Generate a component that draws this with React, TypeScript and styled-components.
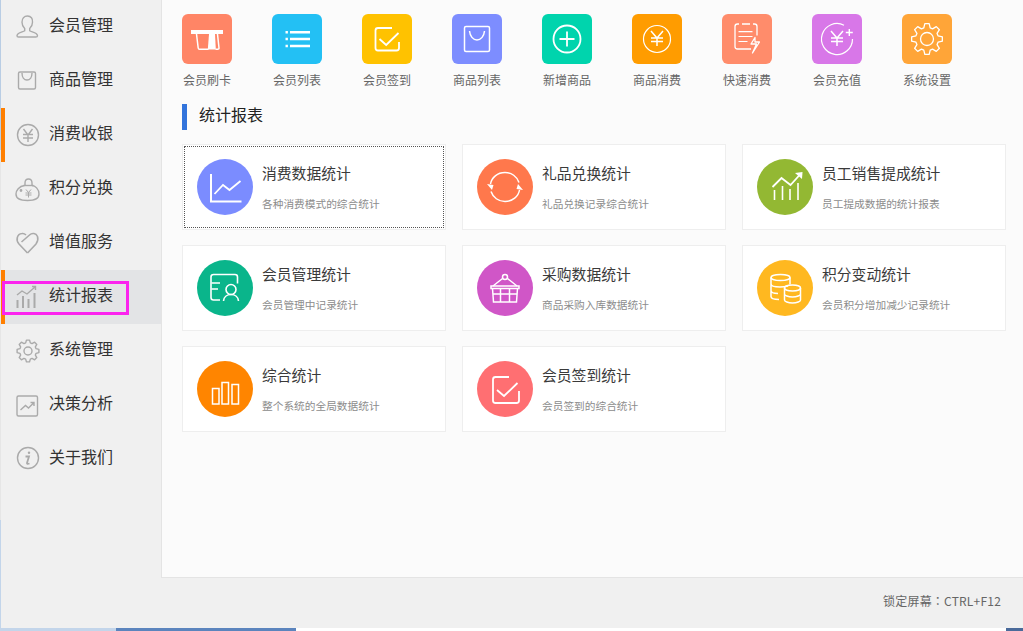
import React from "react";
import styled, { createGlobalStyle } from "styled-components";

const Global = createGlobalStyle`
  html, body { margin: 0; padding: 0; height: 631px; overflow: hidden; background: #fff; }
  * { box-sizing: border-box; }
`;

const FONT = `"Noto Sans CJK SC", "Noto Sans", "Liberation Sans", sans-serif`;

const Frame = styled.div`
  position: relative;
  width: 1023px;
  height: 631px;
  display: flex;
  flex-direction: column;
  font-family: ${FONT};
  overflow: hidden;
`;
const Window = styled.div`
  flex: 0 0 628px;
  display: flex;
  min-height: 0;
`;
const LeftEdge = styled.div`
  flex: 0 0 1px;
  background: linear-gradient(#b9cde4 0 150px, #e6e6e6 150px 520px, #c3d5ea 520px);
`;
const Sidebar = styled.nav`
  flex: 0 0 160px;
  background: #f0f0f0;
`;
const NavItem = styled.div<{ $marked?: boolean; $active?: boolean }>`
  height: 54px;
  display: flex;
  align-items: center;
  gap: 5px;
  padding-left: 7px;
  border-left: 4px solid ${(p) => (p.$marked ? "#ff7f00" : "transparent")};
  background: ${(p) => (p.$active ? "#e3e4e6" : "transparent")};
  font-size: 16px;
  color: #333;
`;
const NavLabel = styled.span`
  padding-bottom: 6px;
`;
const NavIcon = styled.svg`
  flex: 0 0 32px;
  width: 32px;
  height: 32px;
  fill: none;
  stroke: #aaa;
  stroke-width: 1.4;
`;
const Highlight = styled.div`
  position: absolute;
  left: 2px;
  top: 281px;
  width: 127px;
  height: 34px;
  border: 3px solid #fb24ee;
`;
const Right = styled.div`
  flex: 1;
  display: flex;
  flex-direction: column;
  min-width: 0;
`;
const Main = styled.main`
  flex: 0 0 578px;
  background: #fbfbfb;
  border-left: 1px solid #e4e4e4;
  border-bottom: 1px solid #e4e4e4;
  padding: 14px 20px 0;
`;
const QuickRow = styled.div`
  display: flex;
  gap: 40px;
`;
const Quick = styled.div`
  width: 50px;
  display: flex;
  flex-direction: column;
  align-items: center;
`;
const Tile = styled.svg<{ $color: string }>`
  width: 50px;
  height: 50px;
  border-radius: 6px;
  background: ${(p) => p.$color};
  fill: none;
  stroke: #fff;
  stroke-width: 1.5;
`;
const QuickLabel = styled.span`
  margin-top: 7px;
  font-size: 12px;
  line-height: 17px;
  color: #666;
  white-space: nowrap;
`;
const SectionTitle = styled.h2`
  margin: 16px 0 0;
  height: 26px;
  border-left: 5px solid #3274dc;
  padding-left: 12px;
  font-size: 16px;
  font-weight: 400;
  line-height: 20px;
  color: #222;
`;
const Grid = styled.div`
  margin-top: 14px;
  display: grid;
  grid-template-columns: repeat(3, 264px);
  grid-auto-rows: 86px;
  column-gap: 16px;
  row-gap: 15px;
`;
const Card = styled.div<{ $focused?: boolean }>`
  background: #fff;
  border: 1px solid #eee;
  padding: 14px 0 0 14px;
  display: flex;
  align-items: flex-start;
  gap: 9px;
  outline: ${(p) => (p.$focused ? "1px dotted #555" : "none")};
  outline-offset: -3px;
`;
const Circle = styled.svg<{ $color: string }>`
  flex: 0 0 56px;
  width: 56px;
  height: 56px;
  border-radius: 50%;
  background: ${(p) => p.$color};
  fill: none;
  stroke: #fff;
  stroke-width: 1.5;
`;
const CardText = styled.div`
  padding-top: 3px;
  display: flex;
  flex-direction: column;
  gap: 13px;
`;
const CardTitle = styled.span`
  font-size: 14.8px;
  line-height: 21px;
  color: #3a3a3a;
  white-space: nowrap;
`;
const CardSub = styled.span`
  font-size: 10.7px;
  line-height: 16px;
  color: #8c8c8c;
  white-space: nowrap;
`;
const Footer = styled.footer`
  flex: 1;
  background: #f0f0f0;
  display: flex;
  justify-content: flex-end;
  align-items: flex-start;
  padding: 14px 22px 0 0;
  font-family: "Noto Sans CJK TC", ${FONT};
  font-size: 12px;
  letter-spacing: 0.2px;
  line-height: 17px;
  color: #666;
`;
const Taskbar = styled.div`
  flex: 0 0 3px;
  display: flex;
`;
const TaskSegment = styled.div<{ $w: number; $color: string }>`
  flex: 0 0 ${(p) => p.$w}px;
  background: ${(p) => p.$color};
`;

const gearPath = (cx: number, cy: number, outer: number, inner: number, teeth = 8) => {
  const pts: string[] = [];
  const step = (Math.PI * 2) / teeth;
  for (let i = 0; i < teeth; i++) {
    const a = i * step - Math.PI / 2;
    const list: [number, number][] = [
      [a - step * 0.36, inner],
      [a - step * 0.18, outer],
      [a + step * 0.18, outer],
      [a + step * 0.36, inner],
    ];
    list.forEach(([ang, r]) =>
      pts.push(`${(cx + Math.cos(ang) * r).toFixed(2)} ${(cy + Math.sin(ang) * r).toFixed(2)}`)
    );
  }
  return "M" + pts.join("L") + "Z";
};

const navIcons: Record<string, React.ReactNode> = {
  user: (
    <>
      <path d="M15.500 5c-3.400 0-5.500 2.700-5.500 6.200 0 2.800 1.300 5 2.700 6.400v2.200c-1.800 1.300-7.700 1.800-7.700 5 0 1 .6 1.200 1.500 1.200h17.200c1 0 1.800-.3 1.800-1.200 0-3.200-6-3.700-7.800-5v-2.200c1.500-1.400 2.800-3.600 2.800-6.400C21 7.700 18.900 5 15.500 5z" />
    </>
  ),
  bag: (
    <>
      <rect x="6.500" y="7" width="17" height="17" rx="1.500" />
      <path d="M10 8c0 4 2 7 5 7s5-3 5-7" />
    </>
  ),
  yen: (
    <>
      <circle cx="16" cy="16" r="10.500" />
      <path d="M11.500 10l4.500 6 4.500-6M11 15.500h10M11 19h10M16 16v7" />
    </>
  ),
  pot: (
    <>
      <path d="M12.500 12.500C7 13 4 18 4 21c0 4 4 6.500 11.500 6.500S27 25 27 21c0-5-4-8.500-7-8.500" />
      <path d="M11.500 12.500h10" />
      <path d="M13 12v-2c0-2.500 1.500-4 3.500-4s3.500 1.500 3.500 4v2" />
      <path d="M14 16.500l2.500 3 2.500-3M13.500 20h6M13.500 22h6M16.500 19.500v5" strokeWidth="1" />
      <circle cx="9" cy="17.500" r=".7" />
    </>
  ),
  heart: (
    <>
      <path d="M15.500 26L7 17C3.500 13 5 7 10 6.500c1.500-.2 3 .5 4 1.500" strokeWidth="1.600" />
      <path d="M9.500 15l8-7c2.500-2.500 6.500-2 8 1.500 1 3 0 5.500-1.500 7.500l-8.500 9" strokeWidth="1.600" />
    </>
  ),
  stats: (
    <>
      <path d="M5 14l5-4 5 3 8-7M20 5.500h3.500V9" />
      <path d="M5.500 27v-8M11 27V15M16.500 27V18M22.500 27V12" strokeWidth="2" />
    </>
  ),
  gear: (
    <>
      <path d={gearPath(16, 16, 11, 8.4)} strokeLinejoin="round" />
      <circle cx="16" cy="16" r="4" />
    </>
  ),
  chart: (
    <>
      <rect x="5" y="7" width="20.500" height="20" rx="1.500" />
      <path d="M8.500 21l5-4.500 3 2.500 5-5M18.500 13.500h3.500V17" />
    </>
  ),
  info: (
    <>
      <circle cx="16" cy="15" r="10.500" />
      <circle cx="17" cy="9.800" r="1.200" fill="#aaa" stroke="none" />
      <path d="M13.500 13.500h3.500l-2 6.500c-.2 1 .4 1.200 2.500.5" strokeWidth="1.800" />
    </>
  ),
};

const nav = [
  { label: "会员管理", icon: "user" },
  { label: "商品管理", icon: "bag" },
  { label: "消费收银", icon: "yen", marked: true },
  { label: "积分兑换", icon: "pot" },
  { label: "增值服务", icon: "heart" },
  { label: "统计报表", icon: "stats", marked: true, active: true },
  { label: "系统管理", icon: "gear" },
  { label: "决策分析", icon: "chart" },
  { label: "关于我们", icon: "info" },
];

const yen = (cx: number, cy: number, s = 1) => (
  <path
    d={`M${cx - 6 * s} ${cy - 7 * s}l${6 * s} ${7 * s} ${6 * s}-${7 * s}M${cx - 6 * s} ${cy}h${12 * s}M${cx - 6 * s} ${cy + 3.5 * s}h${12 * s}M${cx} ${cy}v${8 * s}`}
  />
);

const quicks = [
  {
    label: "会员刷卡",
    color: "#ff8566",
    art: (
      <>
        <path d="M9 16h32v4H9z" fill="#fff" stroke="none" />
        <path d="M14.500 20l1.700 14c.1.8.6 1.200 1.300 1.200H26.500M35.500 20l1.500 14c.1.8-.6 1.200-1.300 1.200H33.500" />
        <path d="M27 20h6l.8 15.500h-8z" fill="#fff" stroke="none" />
      </>
    ),
  },
  {
    label: "会员列表",
    color: "#23c0f4",
    art: (
      <>
        <path d="M18 18.300h20M18 25h20M18 32h20" strokeWidth="2.500" />
        <path d="M13.500 18.300h2.400M13.500 25h2.400M13.500 32h2.400" strokeWidth="2.500" />
      </>
    ),
  },
  {
    label: "会员签到",
    color: "#ffc200",
    art: (
      <>
        <path d="M30 14H16c-1.500 0-2.500 1-2.500 2.500v17.500c0 1.500 1 2.500 2.500 2.500h18.500c1.500 0 2.500-1 2.500-2.500V28" strokeWidth="1.800" />
        <path d="M17.500 25l6.700 6L36.500 19" strokeWidth="1.800" />
      </>
    ),
  },
  {
    label: "商品列表",
    color: "#7d8dff",
    art: (
      <>
        <rect x="12.500" y="12.500" width="25" height="25" rx="1.500" />
        <path d="M17.500 17c.5 5 3.500 9 7.500 9s7-4 7.500-9" />
      </>
    ),
  },
  {
    label: "新增商品",
    color: "#00d4ad",
    art: (
      <>
        <circle cx="25" cy="25" r="13.500" strokeWidth="1.800" />
        <path d="M25 17.500v15M17.500 25h15" strokeWidth="1.800" />
      </>
    ),
  },
  {
    label: "商品消费",
    color: "#ff9c00",
    art: (
      <>
        <circle cx="25" cy="25" r="13.500" strokeWidth="1.200" />
        {yen(25, 24)}
      </>
    ),
  },
  {
    label: "快速消费",
    color: "#ff8c6b",
    art: (
      <>
        <path d="M20 10h8M31 10h1.500c1.500 0 2.500 1 2.500 2.500v9M29 35H15.500c-1.500 0-2.500-1-2.500-2.500v-20c0-1.500 1-2.500 2.500-2.500H17" strokeWidth="1.300" />
        <path d="M16.500 17.700h14M16.500 22.500h14M16.500 27.500h9" strokeWidth="1.200" />
        <path d="M33 23.500L29 30h5.500l-4 9 7-11h-4.500z" strokeWidth="1.300" strokeLinejoin="round" />
      </>
    ),
  },
  {
    label: "会员充值",
    color: "#d877e8",
    art: (
      <>
        <path d="M32 11.200A15.500 15.500 0 1 0 40.500 25" strokeWidth="1.200" />
        <path d="M37.300 15v7M33.800 18.500h7" strokeWidth="1.400" />
        {yen(25, 24)}
      </>
    ),
  },
  {
    label: "系统设置",
    color: "#ffa538",
    art: (
      <>
        <path d={gearPath(25, 25, 15.5, 11.5)} strokeWidth="1.300" strokeLinejoin="round" />
        <circle cx="25" cy="25" r="6.500" strokeWidth="1.300" />
      </>
    ),
  },
];

const cards = [
  {
    title: "消费数据统计",
    sub: "各种消费模式的综合统计",
    color: "#7b8cff",
    art: (
      <>
        <path d="M14 15v27.500h30.500" strokeWidth="2" />
        <path d="M17.500 35l8.500-9 6.500 5 11-9" strokeWidth="1.800" />
      </>
    ),
  },
  {
    title: "礼品兑换统计",
    sub: "礼品兑换记录综合统计",
    color: "#ff784c",
    art: (
      <>
        <path d="M13.500 25c1-6.500 7-11.500 14.500-11.500 6.500 0 12 4 14 10" strokeWidth="1.500" />
        <path d="M42.500 31c-1 6.500-7 11.500-14.500 11.500-6.500 0-12-4-14-10" strokeWidth="1.500" />
        <path d="M10 25l6.500 1-1.500 5zM46 31l-6.500-1 1.500-5z" fill="#fff" stroke="none" />
      </>
    ),
  },
  {
    title: "员工销售提成统计",
    sub: "员工提成数据的统计报表",
    color: "#93b833",
    art: (
      <>
        <path d="M15.500 28l9-9 9 7 10-11" strokeWidth="1.800" />
        <path d="M38 14l7.500-1 -.5 7z" fill="#fff" stroke="none" />
        <path d="M17.500 31v10M25.500 27v14M33 30v11M41 24v17" strokeWidth="1.600" />
      </>
    ),
  },
  {
    title: "会员管理统计",
    sub: "会员管理中记录统计",
    color: "#0ab58b",
    art: (
      <>
        <path d="M23 40h-6.500c-1.500 0-2.500-1-2.500-2.500V17c0-1.500 1-2.500 2.500-2.500H38c1.500 0 2.500 1 2.500 2.500v6.500" strokeWidth="1.600" />
        <path d="M14.500 23h8.500M14.500 29h6.500" strokeWidth="1.600" />
        <circle cx="34" cy="29.500" r="5" strokeWidth="1.600" />
        <path d="M26.500 41c.2-4 3.500-6.500 7.500-6.500s7.300 2.500 7.500 6.500" strokeWidth="1.600" />
      </>
    ),
  },
  {
    title: "采购数据统计",
    sub: "商品采购入库数据统计",
    color: "#d056c7",
    art: (
      <>
        <circle cx="28" cy="17" r="2.500" />
        <path d="M25.500 18.500L16 26M30.500 18.500L40 26" />
        <path d="M14 26h28v2.500H14z" />
        <path d="M15.500 28.500l1 13.500h23l1-13.500M16 34h24M23.500 28.500V42M32.500 28.500V42" />
      </>
    ),
  },
  {
    title: "积分变动统计",
    sub: "会员积分增加减少记录统计",
    color: "#ffb820",
    art: (
      <>
        <ellipse cx="23.500" cy="17.500" rx="9.500" ry="3" />
        <path d="M14 17.500v19c0 1.800 3.500 3 8 3M14 24c0 1.800 4 3 9 3 3 0 6-.5 8-1M14 30.500c0 1.800 3 3 7 3M33 17.500v7" />
        <ellipse cx="35.500" cy="28" rx="8" ry="3" />
        <path d="M27.500 28v12c0 1.500 3.500 3 8 3s8-1.500 8-3V28M27.500 34c0 1.500 3.500 3 8 3s8-1.500 8-3" />
      </>
    ),
  },
  {
    title: "综合统计",
    sub: "整个系统的全局数据统计",
    color: "#ff8500",
    art: (
      <>
        <rect x="15.500" y="27.500" width="6.500" height="15.500" />
        <rect x="25" y="21.500" width="6.500" height="21.500" />
        <rect x="35" y="23.500" width="6.500" height="19.500" />
      </>
    ),
  },
  {
    title: "会员签到统计",
    sub: "会员签到的综合统计",
    color: "#ff6f72",
    art: (
      <>
        <path d="M32 16H18.500c-1.500 0-2.500 1-2.500 2.500v21c0 1.500 1 2.500 2.500 2.500h21c1.500 0 2.500-1 2.500-2.500V30" strokeWidth="1.800" />
        <path d="M20 29l7 6 13.500-13" strokeWidth="1.800" />
      </>
    ),
  },
];

export default function App() {
  return (
    <Frame>
      <Global />
      <Window>
        <LeftEdge />
        <Sidebar>
          {nav.map((n) => (
            <NavItem key={n.label} $marked={n.marked} $active={n.active}>
              <NavIcon viewBox="0 0 32 32">{navIcons[n.icon]}</NavIcon>
              <NavLabel>{n.label}</NavLabel>
            </NavItem>
          ))}
        </Sidebar>
        <Right>
          <Main>
            <QuickRow>
              {quicks.map((q) => (
                <Quick key={q.label}>
                  <Tile $color={q.color} viewBox="0 0 50 50">
                    {q.art}
                  </Tile>
                  <QuickLabel>{q.label}</QuickLabel>
                </Quick>
              ))}
            </QuickRow>
            <SectionTitle>统计报表</SectionTitle>
            <Grid>
              {cards.map((c, i) => (
                <Card key={c.title} $focused={i === 0}>
                  <Circle $color={c.color} viewBox="0 0 56 56">
                    {c.art}
                  </Circle>
                  <CardText>
                    <CardTitle>{c.title}</CardTitle>
                    <CardSub>{c.sub}</CardSub>
                  </CardText>
                </Card>
              ))}
            </Grid>
          </Main>
          <Footer>锁定屏幕：CTRL+F12</Footer>
        </Right>
      </Window>
      <Taskbar>
        <TaskSegment $w={116} $color="#c3d5ea" />
        <TaskSegment $w={180} $color="#5b84bd" />
        <TaskSegment $w={710} $color="#ffffff" />
        <TaskSegment $w={17} $color="#4a6a9a" />
      </Taskbar>
      <Highlight />
    </Frame>
  );
}
